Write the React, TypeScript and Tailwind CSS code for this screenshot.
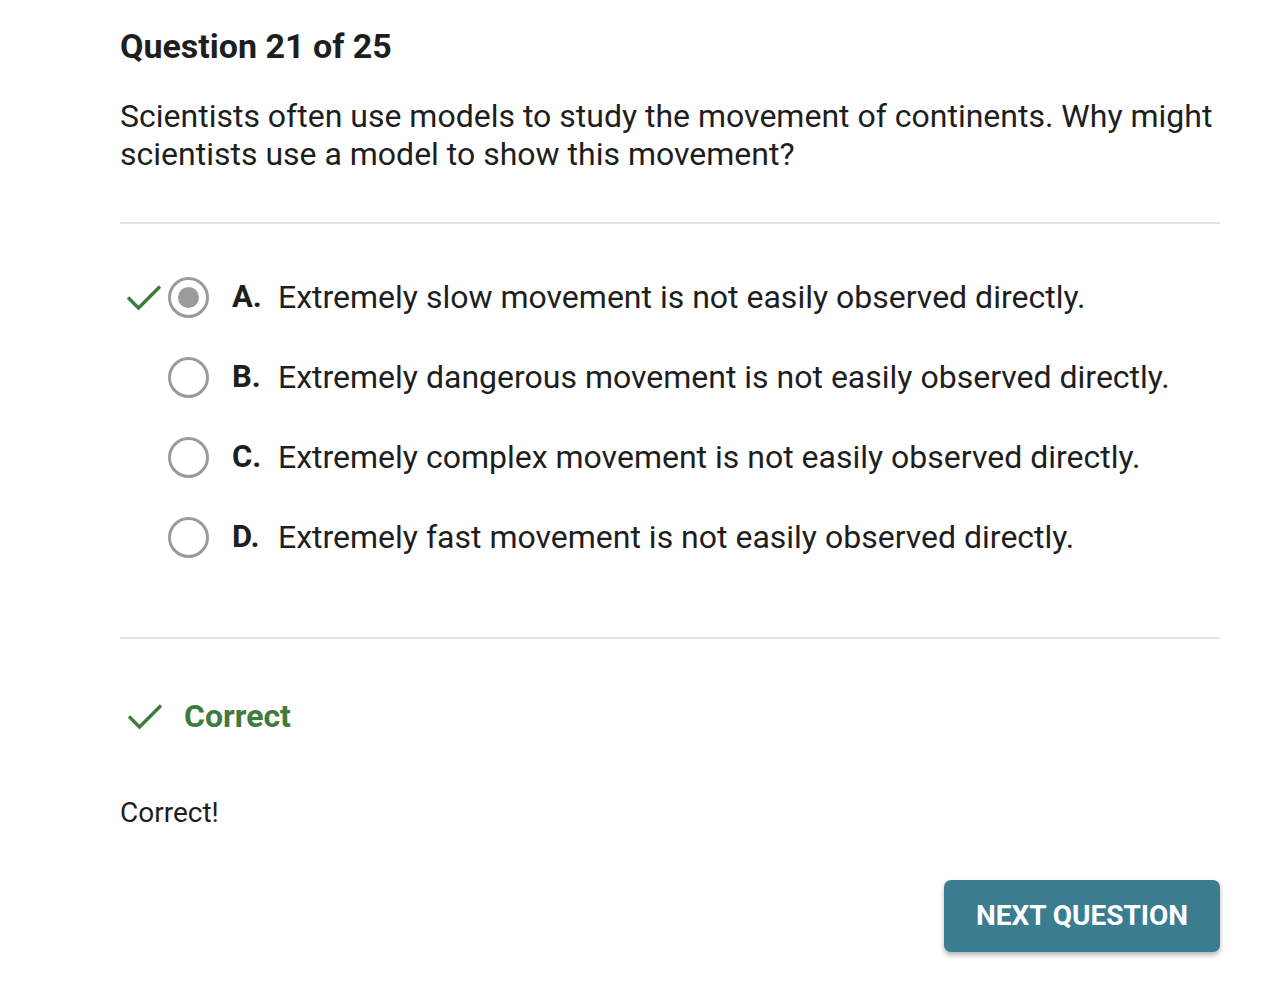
import { ReactNode } from "react";

const options = [
  { letter: "A.", text: "Extremely slow movement is not easily observed directly.", picked: true },
  { letter: "B.", text: "Extremely dangerous movement is not easily observed directly.", picked: false },
  { letter: "C.", text: "Extremely complex movement is not easily observed directly.", picked: false },
  { letter: "D.", text: "Extremely fast movement is not easily observed directly.", picked: false },
];

function Check({ className }: { className?: string }) {
  return (
    <svg viewBox="0 0 38 30" className={className} fill="none">
      <path d="M3 15.5 L13.5 26 L35 4.5" stroke="#3e7b3c" strokeWidth="3.4" />
    </svg>
  );
}

function Radio({ picked }: { picked: boolean }) {
  return (
    <div className="grid h-[41px] w-[41px] place-items-center rounded-full border-[3px] border-[#9b9b9b]">
      {picked && <div className="h-[21px] w-[21px] rounded-full bg-[#9b9b9b]" />}
    </div>
  );
}

function Divider() {
  return <div className="h-[2px] w-full bg-[#e3e3e3]" />;
}

function Row({ picked, children }: { picked: boolean; children: ReactNode }) {
  return (
    <div className="flex h-[80px] items-center">
      <div className="flex w-[48px] shrink-0 items-center">
        {picked && <Check className="ml-[5px] h-[30px] w-[38px]" />}
      </div>
      <Radio picked={picked} />
      {children}
    </div>
  );
}

export default function App() {
  return (
    <div className="min-h-[1004px] bg-white font-['Roboto',sans-serif] text-[#1e1e1e]">
      <div className="ml-[120px] w-[1100px] pt-[25px]">
        <h1 className="text-[34px] font-bold leading-[42px]">Question 21 of 25</h1>
        <p className="mt-[30px] text-[32px] leading-[38px]">
          Scientists often use models to study the movement of continents. Why might scientists use a model to show this movement?
        </p>
        <div className="mt-[49px]">
          <Divider />
        </div>
        <div className="pt-[33px] pb-[60px]">
          {options.map((o) => (
            <Row key={o.letter} picked={o.picked}>
              <span className="ml-[23px] w-[46px] shrink-0 text-[31px] font-bold">{o.letter}</span>
              <span className="text-[32px]">{o.text}</span>
            </Row>
          ))}
        </div>
        <Divider />
        <div className="mt-[53px] flex items-center">
          <Check className="ml-[6px] h-[30px] w-[38px]" />
          <span className="ml-[20px] text-[32px] font-bold text-[#3e7b3c]">Correct</span>
        </div>
        <p className="mt-[55px] text-[28px] leading-[36px]">Correct!</p>
        <div className="mt-[49px] flex justify-end">
          <button className="h-[72px] w-[276px] rounded-[7px] bg-[#3a7d91] text-[28px] font-bold text-white shadow-[0_3px_5px_rgba(0,0,0,0.3)]">
            NEXT QUESTION
          </button>
        </div>
      </div>
    </div>
  );
}
